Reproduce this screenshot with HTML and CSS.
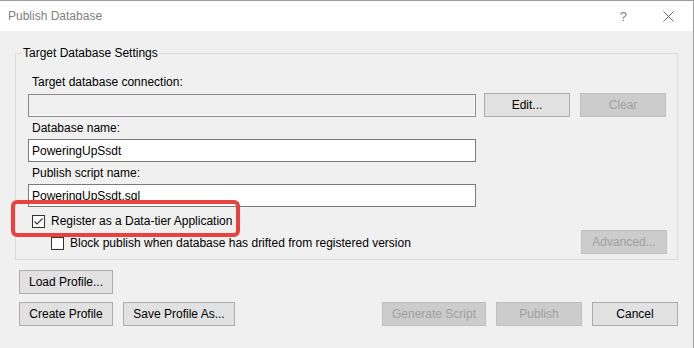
FILE: index.html
```html
<!DOCTYPE html>
<html lang="en">
  <head>
    <meta charset="UTF-8" />
    <title>Publish Database</title>
    <link rel="stylesheet" href="styles.css">
  </head>
  <body>
    <div class="window">
      <div class="titlebar">
        <span class="title">Publish Database</span>
        <span class="help">?</span>
        <svg class="close" width="11" height="11" viewBox="0 0 11 11">
          <path d="M0.5 0.5L10.5 10.5M10.5 0.5L0.5 10.5" stroke="#6a6a6a" stroke-width="1" fill="none" />
        </svg>
      </div>

      <div class="content">
        <fieldset class="group">
          <legend>Target Database Settings</legend>

          <div class="field-label first">Target database connection:</div>
          <div class="conn-row">
            <input class="text" type="text" disabled />
            <button class="btn edit">Edit...</button>
            <button class="btn clear" disabled>Clear</button>
          </div>

          <div class="field-label">Database name:</div>
          <input class="text db-name" type="text" value="PoweringUpSsdt" />

          <div class="field-label">Publish script name:</div>
          <input class="text" type="text" value="PoweringUpSsdt.sql" />

          <div class="check register">
            <span class="box">
              <svg width="11" height="11" viewBox="0 0 11 11">
                <polyline points="1.5,5.5 4,8 9.5,2.5" stroke="#333" stroke-width="1.1" fill="none" />
              </svg>
            </span>
            Register as a Data-tier Application
          </div>

          <div class="block-row">
            <div class="check drift">
              <span class="box"></span>
              Block publish when database has drifted from registered version
            </div>
            <button class="btn" disabled>Advanced...</button>
          </div>
        </fieldset>

        <div class="btn-row load">
          <button class="btn wide">Load Profile...</button>
        </div>

        <div class="btn-row footer">
          <button class="btn wide">Create Profile</button>
          <button class="btn save">Save Profile As...</button>
          <span class="spacer"></span>
          <button class="btn generate" disabled>Generate Script</button>
          <button class="btn" disabled>Publish</button>
          <button class="btn">Cancel</button>
        </div>
      </div>

      <!-- annotation box round the checkbox -->
      <div class="highlight"></div>
    </div>
  </body>
</html>
```

FILE: styles.css
```css
* {
  margin: 0;
  padding: 0;
  box-sizing: border-box;
  font-family: "Liberation Sans", Arial, sans-serif;
}
body {
  width: 694px;
  height: 348px;
  overflow: hidden;
  background: #f0f0f0;
}
.window {
  position: relative;
  width: 694px;
  height: 348px;
  background: #f0f0f0;
  border-top: 1px solid #9c9c9c;
  border-right: 1px solid #9c9c9c;
  font-size: 12px;
  color: #000;
}
.titlebar {
  display: flex;
  align-items: center;
  height: 30px;
  padding-left: 8px;
  background: #fff;
}
.title {
  flex: 1;
  color: #808080;
  font-size: 12px;
}
.help {
  color: #808080;
  font-size: 13px;
  margin-right: 36px;
}
.close {
  margin-right: 19px;
}
.content {
  padding: 0 15px 0 15px;
}
.group {
  margin-top: 14px;
  border: 1px solid #dcdcdc;
  padding: 13px 10px 5px 12px;
}
.group legend {
  margin-left: -6px;
  padding: 0 1px;
  line-height: 16px;
  font-size: 12px;
}
.field-label {
  line-height: 17px;
  margin-top: 3px;
  margin-bottom: 2px;
  padding-left: 4px;
}
.field-label.first {
  margin-top: 0;
}
.conn-row {
  display: flex;
  align-items: flex-end;
}
.text {
  display: block;
  width: 448px;
  height: 23px;
  border: 1px solid #7a7a7a;
  background: #fff;
  padding: 0 3px;
  font-size: 12px;
  color: #000;
  outline: none;
}
.text:disabled {
  background: #f0f0f0;
  border-color: #8a8a8a;
  box-shadow: inset -1px -1px 0 #fff;
}
.db-name {
  margin-bottom: 1px;
}
.btn {
  width: 86px;
  height: 24px;
  border: 1px solid #adadad;
  background: #e1e1e1;
  font-size: 12px;
  color: #000;
}
.btn:disabled {
  background: #cccccc;
  border-color: #bfbfbf;
  color: #a0a0a0;
}
.edit {
  margin-left: 8px;
}
.clear {
  margin-left: 10px;
}
.check {
  display: flex;
  align-items: center;
  height: 16px;
  line-height: 16px;
}
.box {
  display: flex;
  align-items: center;
  justify-content: center;
  width: 13px;
  height: 13px;
  border: 1px solid #333;
  background: #fff;
  margin-right: 6px;
}
.register {
  margin-top: 6px;
  padding-left: 4px;
}
.block-row {
  display: flex;
  align-items: flex-start;
  justify-content: space-between;
  margin-top: 1px;
}
.drift {
  margin-top: 5px;
  padding-left: 23px;
}
.btn-row {
  display: flex;
  padding-left: 4px;
}
.load {
  margin-top: 10px;
}
.footer {
  margin-top: 8px;
}
.wide {
  width: 94px;
}
.save {
  width: 112px;
  margin-left: 10px;
}
.spacer {
  flex: 1;
}
.generate {
  width: 104px;
  margin-right: 10px;
}
.footer .btn:last-child {
  margin-left: 10px;
}
.highlight {
  position: absolute;
  left: 11px;
  top: 199px;
  width: 229px;
  height: 37px;
  border: 4px solid #e8413f;
  border-radius: 6px;
  pointer-events: none;
}
```
